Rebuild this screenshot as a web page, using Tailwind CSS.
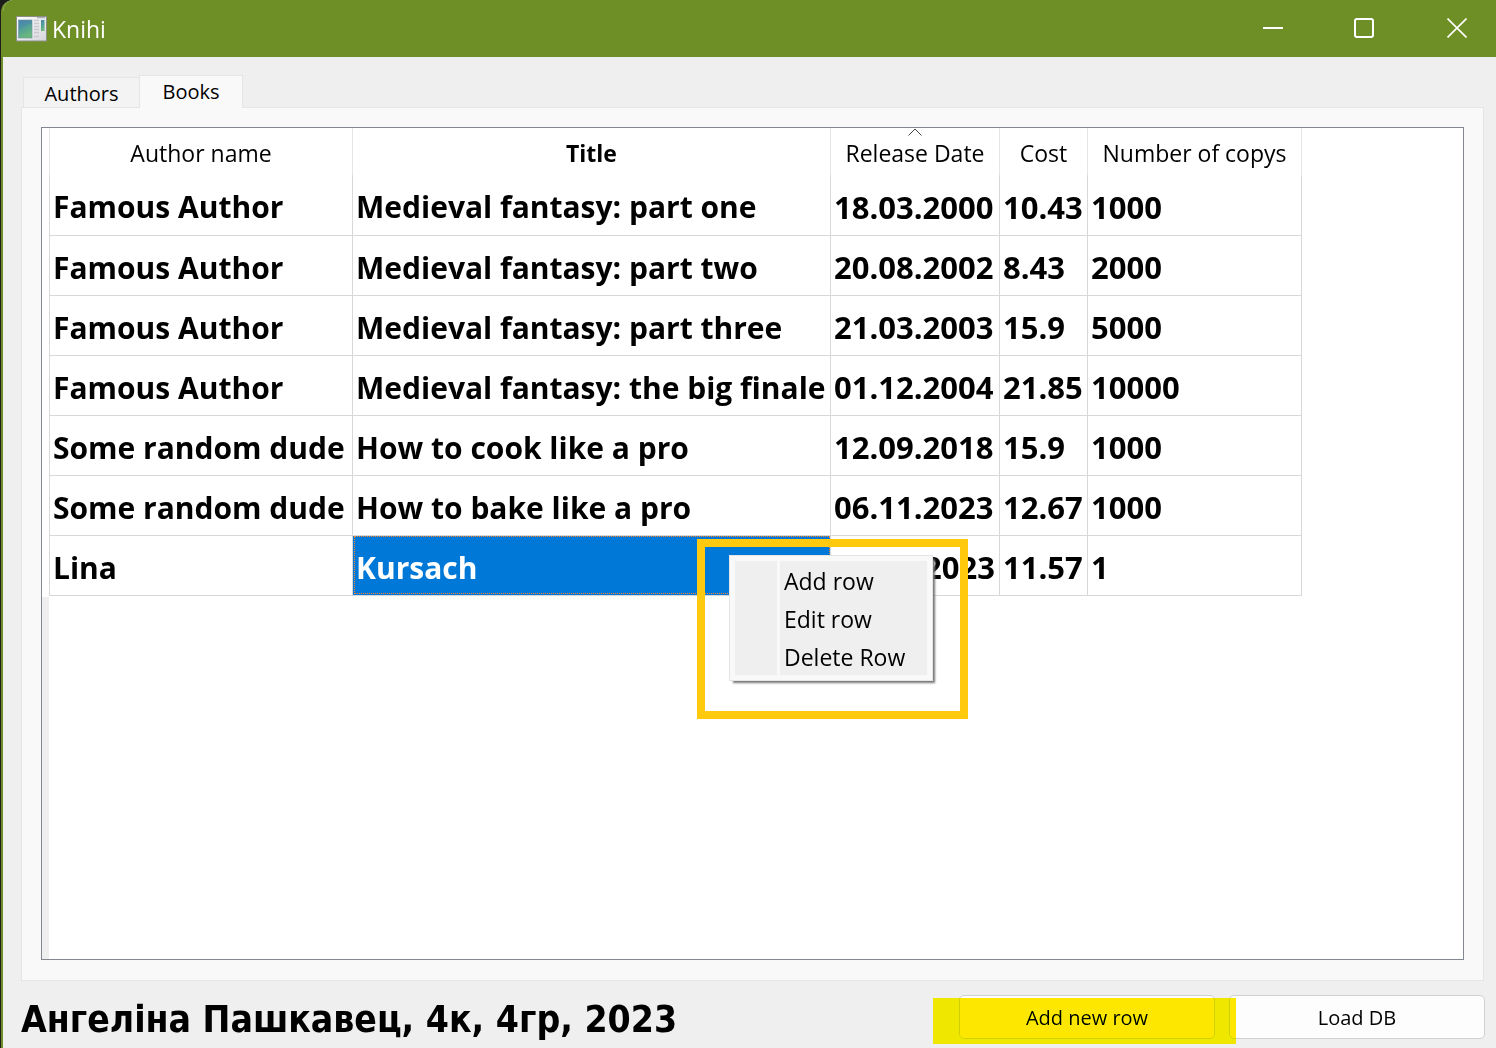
<!DOCTYPE html>
<html lang="en">
<head>
<meta charset="utf-8">
<title>Knihi</title>
<script src="https://cdn.jsdelivr.net/npm/@tailwindcss/browser@4"></script>
</head>
<body class="bg-[#1c1c1c] pl-px font-['Open_Sans',sans-serif] text-black">
<div class="flex h-screen flex-col overflow-hidden rounded-tl-xl border-l-2 border-[#6e8f26] bg-[#efefef]">

  <header class="flex h-[57px] shrink-0 items-center bg-[#6e8f26] pl-3 text-white">
    <svg class="h-7 w-8" viewBox="0 0 32 28" aria-hidden="true">
      <defs>
        <linearGradient id="pane" x1="0" y1="0" x2="0.4" y2="1"><stop offset="0" stop-color="#4a7fae"/><stop offset="0.45" stop-color="#4f9c9c"/><stop offset="1" stop-color="#69b97c"/></linearGradient>
        <linearGradient id="frame" x1="0" y1="0" x2="1" y2="1"><stop offset="0" stop-color="#fff"/><stop offset="1" stop-color="#d5d5dc"/></linearGradient>
      </defs>
      <rect x="1.5" y="1.5" width="30" height="24.500" fill="url(#frame)" stroke="#8b8f88"/>
      <path d="M22 2h8v1.200h-8z" fill="#aab0b8"/>
      <rect x="3.500" y="5" width="13.500" height="18" fill="url(#pane)" stroke="#6d93a0" stroke-width=".6"/>
      <path d="M4 14c5-4 9-5 13-5V5.500H4z" fill="#4b87ad" opacity=".5"/>
      <path d="M19 5.500h5M19 8.500h5M19 11.500h5M19 14.500h5M19 17.500h5M19 21.500h5" stroke="#c9c9ce" stroke-width="1.500"/>
      <rect x="26" y="5" width="3.500" height="11" fill="url(#pane)"/>
    </svg>
    <h1 class="ml-[5px] grow pt-0.5 text-[23px]">Knihi</h1>
    <button aria-label="Minimize" class="grid h-full w-[92px] place-items-center pb-px"><svg class="size-5" viewBox="0 0 20 20"><path d="M0 10h20" stroke="#fff" stroke-width="2"/></svg></button>
    <button aria-label="Maximize" class="grid h-full w-[90px] place-items-center pb-px"><svg class="size-5" viewBox="0 0 20 20" fill="none"><rect x="1" y="1" width="18" height="18" rx="2" stroke="#fff" stroke-width="2"/></svg></button>
    <button aria-label="Close" class="mr-[-9px] grid h-full w-24 place-items-center pb-px"><svg class="size-5" viewBox="0 0 20 20"><path d="M.5.5l19 19M19.500.5l-19 19" stroke="#fff" stroke-width="1.600"/></svg></button>
  </header>

  <main class="flex min-h-0 grow flex-col pl-[18px] pr-3 pt-[18px]">
    <div role="tablist" class="z-10 -mb-px flex items-end pl-[2px] text-[20px]">
      <button role="tab" aria-selected="false" class="h-[31px] w-[116px] border border-r-0 border-[#e5e5e5] bg-[#f3f3f3] leading-8">Authors</button>
      <button role="tab" aria-selected="true" class="h-[33px] w-[104px] border border-b-0 border-[#e5e5e5] bg-[#f9f9f9] leading-8">Books</button>
    </div>

    <section role="tabpanel" class="flex min-h-0 grow flex-col border border-[#e5e5e5] bg-[#f9f9f9] p-[19px] pb-5">
      <div class="relative flex grow items-start border border-[#828790] bg-white">
        <div class="h-full w-[7px] shrink-0 bg-[#efefef]"><div class="h-[469px] bg-white"></div></div>
        <table class="w-[1253px] table-fixed border-collapse text-left whitespace-nowrap">
          <colgroup><col class="w-[303px]"><col class="w-[478px]"><col class="w-[169px]"><col class="w-[88px]"><col class="w-[214px]"></colgroup>
          <thead class="text-[23px]">
            <tr class="h-[47px] *:border-x *:border-[#e5e5e5] *:p-0 *:pt-[3px] *:text-center *:font-normal">
              <th>Author name</th>
              <th><b>Title</b></th>
              <th class="relative"><svg class="absolute inset-x-0 top-0 mx-auto h-2 w-3.5" viewBox="0 0 14 8" fill="none"><path d="M.5 7.500L7 1l6.500 6.500" stroke="#444"/></svg>Release Date</th>
              <th>Cost</th>
              <th>Number of copys</th>
            </tr>
          </thead>
          <tbody class="text-[31px] font-bold *:h-[60px] [&_td]:border [&_td]:border-t-0 [&_td]:border-[#d8d8d8] [&_td]:py-0 [&_td]:pt-1 [&_td]:pl-[3px] [&_td:nth-child(-n+2)]:text-[30px]">
            <tr><td>Famous Author</td><td>Medieval fantasy: part one</td><td>18.03.2000</td><td>10.43</td><td>1000</td></tr>
            <tr><td>Famous Author</td><td>Medieval fantasy: part two</td><td>20.08.2002</td><td>8.43</td><td>2000</td></tr>
            <tr><td>Famous Author</td><td>Medieval fantasy: part three</td><td>21.03.2003</td><td>15.9</td><td>5000</td></tr>
            <tr><td>Famous Author</td><td>Medieval fantasy: the big finale</td><td>01.12.2004</td><td>21.85</td><td>10000</td></tr>
            <tr><td>Some random dude</td><td>How to cook like a pro</td><td>12.09.2018</td><td>15.9</td><td>1000</td></tr>
            <tr class="h-[61px]"><td>Some random dude</td><td>How to bake like a pro</td><td>06.11.2023</td><td>12.67</td><td>1000</td></tr>
            <tr><td>Lina</td><td class="bg-[#0078d7] text-white outline-1 -outline-offset-2 outline-dotted outline-[#ff8728]">Kursach</td><td class="pr-1 text-right">2023</td><td>11.57</td><td>1</td></tr>
          </tbody>
        </table>

        <div class="absolute left-[655px] top-[411px] h-[180px] w-[271px] border-8 border-[#ffc90e] pl-6 pt-2">
          <div role="menu" class="flex h-[126px] w-[204px] border border-[#e5e5e5] bg-[#f9f9f9] p-[5px] text-[23px] shadow-[3px_3px_2px_-1px_#777]">
            <div class="mr-[3px] w-[42px] bg-[#efefef]"></div>
            <div class="flex grow flex-col bg-[#efefef] pl-1 *:h-[38px] *:pt-0.5 *:text-left">
              <button role="menuitem">Add row</button>
              <button role="menuitem">Edit row</button>
              <button role="menuitem">Delete Row</button>
            </div>
          </div>
        </div>
      </div>
    </section>

    <footer class="-mr-px flex h-[67px] shrink-0 items-start gap-3.5 pt-3.5 text-[20px]">
      <p class="grow font-['DejaVu_Sans_Condensed','DejaVu_Sans',sans-serif] text-[37px] leading-[49px] font-bold">Ангеліна Пашкавец, 4к, 4гр, 2023</p>
      <div class="relative">
        <button class="h-11 w-[256px] rounded-[5px] border border-[#d0d0d0] bg-[#fdfdfd] pt-0.5">Add new row</button>
        <span class="pointer-events-none absolute -left-[26px] top-[3px] h-[46px] w-[303px] bg-[#ffe700] mix-blend-darken"></span>
      </div>
      <button class="h-11 w-[256px] rounded-[5px] border border-[#d0d0d0] bg-[#fdfdfd] pt-0.5">Load DB</button>
    </footer>
  </main>
</div>
</body>
</html>
